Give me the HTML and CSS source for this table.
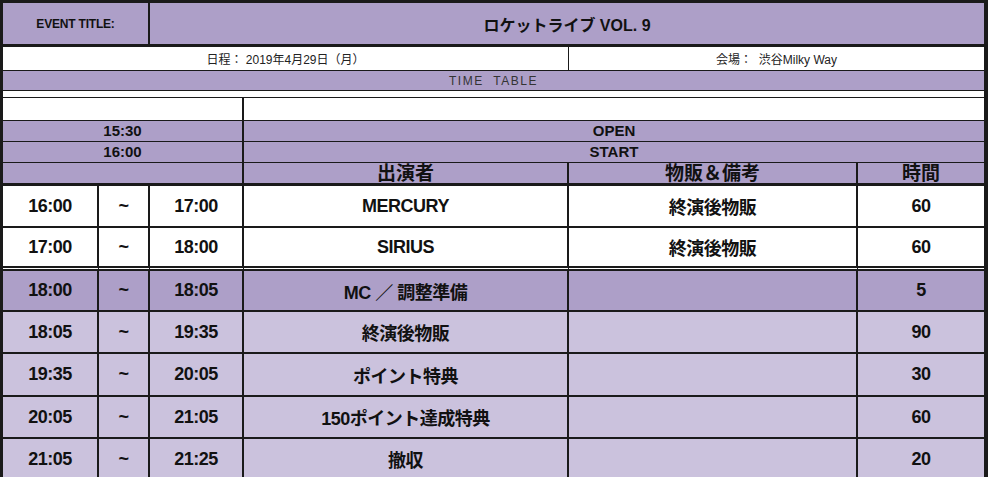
FILE: index.html
```html
<!DOCTYPE html>
<html lang="ja">
<head>
<meta charset="utf-8">
<title>ロケットライブ VOL. 9</title>
<link rel="stylesheet" href="styles.css">
</head>
<body>
<div class="sheet">
  <div class="c dk s2 br2 bb3 evt">EVENT TITLE:</div>
  <div class="c dk s4 bb3 title">ロケットライブ VOL. 9</div>

  <div class="c wh s4 br1 bb1 info">日程：&nbsp;2019年4月29日（月）</div>
  <div class="c wh s2 bb1 info">会場：&nbsp;&nbsp;渋谷Milky Way</div>

  <div class="c dk s6 bb1 tt">TIME&nbsp;&nbsp;TABLE</div>

  <div class="c wh s6 bb1"></div>

  <div class="c wh s3 br2 bb1"></div>
  <div class="c wh s3 bb1"></div>

  <div class="c dk s3 br2 bb1 mid">15:30</div>
  <div class="c dk s3 bb1 mid">OPEN</div>

  <div class="c dk s3 br2 bb1 mid">16:00</div>
  <div class="c dk s3 bb1 mid">START</div>

  <div class="c dk s3 br2 bb3 hd"></div>
  <div class="c dk br2 bb3 hd">出演者</div>
  <div class="c dk br2 bb3 hd">物販＆備考</div>
  <div class="c dk bb3 hd">時間</div>

  <div class="c wh br2 bb2 d">16:00</div>
  <div class="c wh br2 bb2 d">~</div>
  <div class="c wh br2 bb2 d">17:00</div>
  <div class="c wh br2 bb2 d">MERCURY</div>
  <div class="c wh br2 bb2 d">終演後物販</div>
  <div class="c wh bb2 d">60</div>

  <div class="c wh br2 bbd d">17:00</div>
  <div class="c wh br2 bbd d">~</div>
  <div class="c wh br2 bbd d">18:00</div>
  <div class="c wh br2 bbd d">SIRIUS</div>
  <div class="c wh br2 bbd d">終演後物販</div>
  <div class="c wh bbd d">60</div>

  <div class="c dk br2 bb2 d">18:00</div>
  <div class="c dk br2 bb2 d">~</div>
  <div class="c dk br2 bb2 d">18:05</div>
  <div class="c dk br2 bb2 d">MC ／ 調整準備</div>
  <div class="c dk br2 bb2 d"></div>
  <div class="c dk bb2 d">5</div>

  <div class="c lt br2 bb2 d">18:05</div>
  <div class="c lt br2 bb2 d">~</div>
  <div class="c lt br2 bb2 d">19:35</div>
  <div class="c lt br2 bb2 d">終演後物販</div>
  <div class="c lt br2 bb2 d"></div>
  <div class="c lt bb2 d">90</div>

  <div class="c lt br2 bb2 d">19:35</div>
  <div class="c lt br2 bb2 d">~</div>
  <div class="c lt br2 bb2 d">20:05</div>
  <div class="c lt br2 bb2 d">ポイント特典</div>
  <div class="c lt br2 bb2 d"></div>
  <div class="c lt bb2 d">30</div>

  <div class="c lt br2 bb2 d">20:05</div>
  <div class="c lt br2 bb2 d">~</div>
  <div class="c lt br2 bb2 d">21:05</div>
  <div class="c lt br2 bb2 d">150ポイント達成特典</div>
  <div class="c lt br2 bb2 d"></div>
  <div class="c lt bb2 d">60</div>

  <div class="c lt br2 bb2 d">21:05</div>
  <div class="c lt br2 bb2 d">~</div>
  <div class="c lt br2 bb2 d">21:25</div>
  <div class="c lt br2 bb2 d">撤収</div>
  <div class="c lt br2 bb2 d"></div>
  <div class="c lt bb2 d">20</div>
</div>
</body>
</html>
```

FILE: styles.css
```css
html, body {
  margin: 0;
  padding: 0;
  background: #ffffff;
  overflow: hidden;
}

body {
  font-family: "Liberation Sans", "Noto Sans CJK JP", sans-serif;
  color: #111111;
}

.sheet {
  box-sizing: border-box;
  width: 988px;
  border-top: 3px solid #1a1a1a;
  border-left: 3px solid #1a1a1a;
  border-right: 4px solid #1a1a1a;
  display: grid;
  grid-template-columns: 96px 51px 94px 325px 289px 126px;
  grid-template-rows: 44px 24px 20px 7px 23px 21px 21px 23px 42px 43px 41px 42px 43px 42px 42px;
}

.c {
  box-sizing: border-box;
  display: flex;
  align-items: center;
  justify-content: center;
  white-space: nowrap;
  overflow: visible;
  border-color: #1a1a1a;
}

.s2 { grid-column: span 2; }
.s3 { grid-column: span 3; }
.s4 { grid-column: span 4; }
.s6 { grid-column: span 6; }

.br1 { border-right: 1px solid #1a1a1a; }
.br2 { border-right: 2px solid #1a1a1a; }
.bb1 { border-bottom: 1px solid #1a1a1a; }
.bb2 { border-bottom: 2px solid #1a1a1a; }
.bb3 { border-bottom: 3px solid #1a1a1a; }
.bbd { border-bottom: 5px double #1a1a1a; }

.dk { background: #ad9fc8; }
.lt { background: #cbc2dd; }
.wh { background: #ffffff; }

.evt {
  font-size: 12px;
  font-weight: bold;
  letter-spacing: -0.2px;
}

.title {
  font-size: 16px;
  font-weight: bold;
}

.info {
  font-size: 12px;
  color: #222222;
}

.tt {
  font-size: 12px;
  letter-spacing: 1.5px;
  color: #333333;
}

.mid {
  font-size: 15px;
  font-weight: bold;
  line-height: 20px;
}

.hd {
  font-size: 19px;
  font-weight: bold;
  line-height: 20px;
  padding-top: 2px;
}

.d {
  font-size: 18px;
  font-weight: bold;
  letter-spacing: -0.5px;
}
```
